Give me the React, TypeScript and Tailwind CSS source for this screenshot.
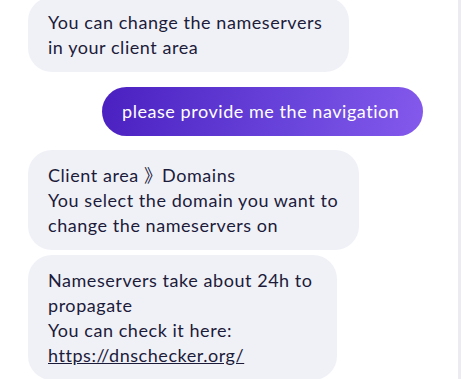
import React from "react";

const font = { fontFamily: 'Lato, "Noto Sans CJK SC", sans-serif' };

function Bot({ children, w }: { children: React.ReactNode; w: string }) {
  return (
    <div className={`self-start ml-[28px] ${w} rounded-[24px] bg-[#f0f1f7] pl-5 pr-2 py-[12.5px] text-[18px] leading-[25px] tracking-[0.55px] text-[#1c1b3a]`}>
      {children}
    </div>
  );
}

export default function App() {
  return (
    <div className="flex w-[461px] h-[379px] overflow-hidden bg-white" style={font}>
      <div className="flex-1 flex flex-col -mt-[3px]">
        <Bot w="w-[321px]">
          You can change the nameservers
          <br />
          in your client area
        </Bot>
        <div className="self-end mr-[35px] mt-[15px] w-[321px] rounded-[25px] bg-[linear-gradient(100deg,#4a20c0_0%,#6a45dc_60%,#8459ec_100%)] pl-5 py-[12px] text-[18px] leading-[25px] tracking-[0.55px] text-white">
          please provide me the navigation
        </div>
        <div className="mt-[14px] flex flex-col gap-[5px]">
          <Bot w="w-[331px]">
            Client area{" "}
            <span className="inline-block w-[13px] overflow-visible whitespace-nowrap tracking-normal">》</span>{" "}
            Domains
            <br />
            You select the domain you want to
            <br />
            change the nameservers on
          </Bot>
          <Bot w="w-[309px]">
            Nameservers take about 24h to
            <br />
            propagate
            <br />
            You can check it here:
            <br />
            <a className="underline" href="#">https://dnschecker.org/</a>
          </Bot>
        </div>
      </div>
      <div className="w-[3px] bg-[#ececf0]" />
    </div>
  );
}
